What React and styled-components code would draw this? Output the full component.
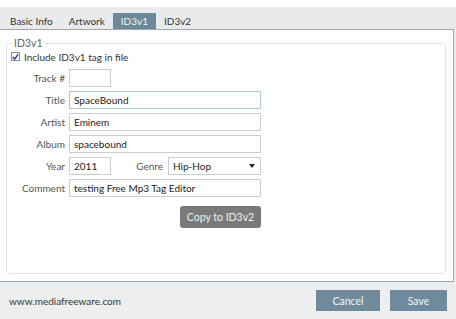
import React from "react";
import styled, { createGlobalStyle } from "styled-components";

const Global = createGlobalStyle`
  html, body { margin: 0; padding: 0; background: #fff; }
  body { font-family: Lato, "Noto Sans", sans-serif; font-size: 10px; color: #333; }
  * { box-sizing: border-box; }
`;

const Window = styled.div`
  width: 456px;
  height: 319px;
  display: flex;
  flex-direction: column;
  background: #ebedee;
`;

const TopStrip = styled.div`
  height: 7px;
  background: #fff;
`;

const TabBar = styled.div`
  height: 22px;
  display: flex;
  align-items: flex-end;
  padding-left: 2px;
  background: #e8eaeb;
`;

const Tab = styled.div`
  height: 16px;
  padding: 0 8px;
  display: flex;
  align-items: center;
  font-size: 10px;
  color: ${(p) => (p.$active ? "#f3f6f8" : "#333")};
  background: ${(p) => (p.$active ? "#6c8899" : "transparent")};
`;

const Panel = styled.div`
  height: 253px;
  width: 454px;
  background: #fff;
  border: 1px solid #9aa9b4;
  border-left: none;
  padding: 8px 7px 7px 6px;
  display: flex;
`;

const Fieldset = styled.fieldset`
  flex: 1;
  margin: 0;
  padding: 1px 0 0 4px;
  border: 1px solid #e2e6e9;
  border-radius: 3px;
  min-width: 0;
`;

const Legend = styled.legend`
  padding: 0 1px;
  margin-left: 2px;
  color: #666;
  line-height: 10px;
  font-size: 10.5px;
`;

const CheckRow = styled.label`
  display: flex;
  align-items: center;
  gap: 4px;
  height: 15px;
  color: #333;
  font-size: 10px;
`;

const Check = styled.span`
  width: 9px;
  height: 9px;
  border: 1px solid #8a8f94;
  background: #f4f4f4;
  display: flex;
  align-items: center;
  justify-content: center;
`;

const Form = styled.div`
  margin-top: 5px;
  display: grid;
  grid-template-columns: 54px 192px;
  column-gap: 4px;
  row-gap: 4px;
  align-items: center;
`;

const Label = styled.div`
  text-align: right;
  color: #555;
`;

const Field = styled.div`
  height: 18px;
  width: ${(p) => p.$w || "192px"};
  border: 1px solid ${(p) => (p.$focus ? "#a9c6da" : "#c9cdd1")};
  background: #fff;
  padding: 0 4px;
  display: flex;
  align-items: center;
  color: #222;
`;

const YearRow = styled.div`
  display: flex;
  align-items: center;
`;

const InlineLabel = styled.div`
  width: 57px;
  text-align: right;
  padding-right: 5px;
  color: #555;
`;

const Select = styled(Field)`
  justify-content: space-between;
  padding-right: 5px;
`;

const Arrow = styled.span`
  width: 0;
  height: 0;
  border-left: 3.5px solid transparent;
  border-right: 3.5px solid transparent;
  border-top: 4px solid #222;
`;

const CopyRow = styled.div`
  display: flex;
  justify-content: flex-end;
  width: 250px;
  margin-top: 9px;
`;

const GreyButton = styled.div`
  width: 81px;
  height: 22px;
  border-radius: 3px;
  background: #7a7a7a;
  color: #f0f0f0;
  font-size: 10.5px;
  display: flex;
  align-items: center;
  justify-content: center;
`;

const Footer = styled.div`
  flex: 1;
  display: flex;
  align-items: center;
  padding: 0 9px 0 9px;
  background: #eceeef;
`;

const Site = styled.div`
  flex: 1;
  color: #333;
`;

const BlueButton = styled.div`
  width: ${(p) => p.$w}px;
  height: 21px;
  margin-left: ${(p) => p.$ml || 0}px;
  background: #6e8a9c;
  color: #f3f6f8;
  font-size: 10.5px;
  display: flex;
  align-items: center;
  justify-content: center;
`;

export default function App() {
  return (
    <>
      <Global />
      <Window>
        <TopStrip />
        <TabBar>
          <Tab>Basic Info</Tab>
          <Tab>Artwork</Tab>
          <Tab $active>ID3v1</Tab>
          <Tab>ID3v2</Tab>
        </TabBar>
        <Panel>
          <Fieldset>
            <Legend>ID3v1</Legend>
            <CheckRow>
              <Check>
                <svg width="8" height="8" viewBox="0 0 8 8">
                  <path d="M1 4 L3 6.5 L7 1" stroke="#2b3a8c" strokeWidth="1.6" fill="none" />
                </svg>
              </Check>
              Include ID3v1 tag in file
            </CheckRow>
            <Form>
              <Label>Track #</Label>
              <Field $w="42px" />
              <Label>Title</Label>
              <Field $focus>SpaceBound</Field>
              <Label>Artist</Label>
              <Field>Eminem</Field>
              <Label>Album</Label>
              <Field>spacebound</Field>
              <Label>Year</Label>
              <YearRow>
                <Field $w="42px">2011</Field>
                <InlineLabel>Genre</InlineLabel>
                <Select $w="93px">
                  Hip-Hop
                  <Arrow />
                </Select>
              </YearRow>
              <Label>Comment</Label>
              <Field>testing Free Mp3 Tag Editor</Field>
            </Form>
            <CopyRow>
              <GreyButton>Copy to ID3v2</GreyButton>
            </CopyRow>
          </Fieldset>
        </Panel>
        <Footer>
          <Site>www.mediafreeware.com</Site>
          <BlueButton $w={64}>Cancel</BlueButton>
          <BlueButton $w={57} $ml={10}>Save</BlueButton>
        </Footer>
      </Window>
    </>
  );
}
